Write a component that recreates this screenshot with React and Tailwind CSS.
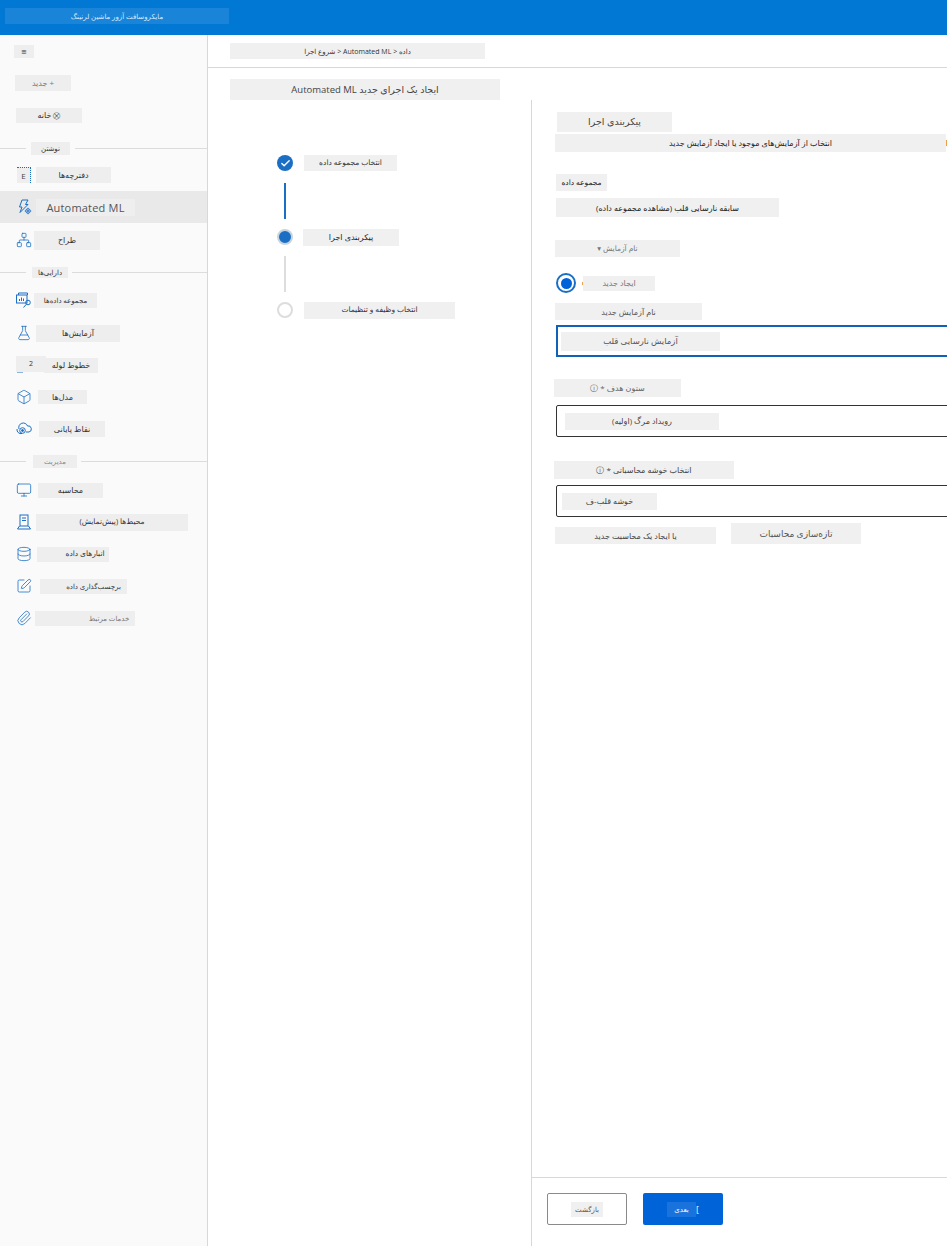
import { Box, Database, FlaskConical, Network, Paperclip, SquarePen, Monitor, Check } from "lucide-react";

const fontStack = "[font-family:'Open_Sans','DejaVu_Sans',sans-serif]";
const iconClass = "w-4 h-4 text-[#1a6fc4] shrink-0";

function Patch({ className, children }) {
	return (
		<div dir="rtl" className={"flex items-center justify-center shrink-0 whitespace-nowrap overflow-hidden leading-none " + className}>
			{children}
		</div>
	);
}

function LabIcon({ children }) {
	return (
		<svg viewBox="0 0 16 16" fill="none" stroke="currentColor" strokeWidth="1" className={iconClass}>
			{children}
		</svg>
	);
}

function NotebookIcon() {
	return (
		<div className="w-[14px] h-4 ml-[1px] shrink-0 bg-[#eeeeee] border-t border-r border-dotted border-[#1a6fc4] flex items-center justify-center text-[8px] text-[#444]">
			E
		</div>
	);
}

function AutoMlIcon() {
	return (
		<LabIcon>
			<path d="M6 1h6L9.5 5.5H12L4 13.5l2-5.5H3.5z" />
			<circle cx="12" cy="12" r="2.2" />
			<circle cx="12" cy="12" r="0.7" />
			<path d="M12 8.8v1M12 14.2v1M8.8 12h1M14.2 12h1" />
		</LabIcon>
	);
}

function DatasetIcon() {
	return (
		<LabIcon>
			<path d="M2.5 3V1h9v2" />
			<rect x="0.5" y="3" width="10.5" height="8" />
			<path d="M3.5 9V7M5.5 9V5.5M7.5 9V6.5" />
			<circle cx="12" cy="10.5" r="2.3" />
			<path d="M10.4 12.2L7.5 15.5" />
		</LabIcon>
	);
}

function EndpointIcon() {
	return (
		<LabIcon>
			<path d="M3 8A4.5 4.5 0 0 1 11.5 5a3 3 0 0 1 1.5 6h-3" />
			<path d="M1 8a4 4 0 0 0 5 4.5" />
			<circle cx="6.5" cy="9.5" r="2.8" />
			<circle cx="6.5" cy="9.5" r="1" fill="currentColor" />
		</LabIcon>
	);
}

function InstanceIcon() {
	return (
		<LabIcon>
			<rect x="4" y="1" width="8" height="11" />
			<path d="M6 4h4M6 6.5h4" />
			<path d="M3.5 12L1.5 15h13l-2-3" />
		</LabIcon>
	);
}

function PipelineIcon() {
	return (
		<LabIcon>
			<rect x="1.5" y="10" width="5" height="5" />
			<path d="M9 12.5h5" />
		</LabIcon>
	);
}

function ComputeIcon() {
	return <Monitor className={iconClass} strokeWidth={1.2} />;
}

function SectionRule({ rowClass, patchClass, label }) {
	return (
		<div className={"flex items-center " + rowClass}>
			<div className="h-px bg-[#dcdcdc] w-[26px]" />
			<Patch className={patchClass}>{label}</Patch>
			<div className="h-px bg-[#dcdcdc] flex-1" />
		</div>
	);
}

function SideRow({ icon, patchClass, label, active }) {
	return (
		<div className={"h-8 flex items-center pl-4 " + (active ? "bg-[#e9e9e9]" : "")}>
			{icon}
			<Patch className={patchClass}>{label}</Patch>
		</div>
	);
}

function Sidebar() {
	return (
		<aside className="w-[208px] shrink-0 bg-[#fafafa] border-r border-[#d8d8d8] text-[8px] text-[#333]">
			<div className="h-8 flex items-center pl-[14px]">
				<Patch className="w-5 h-[13px] bg-[#eeeeee] text-[7px]">≡</Patch>
			</div>
			<div className="h-8 flex items-center pl-[15px]">
				<Patch className="w-14 h-4 bg-[#eeeeee] text-[#777]">+ جدید</Patch>
			</div>
			<div className="h-8 flex items-center pl-4">
				<Patch className="w-[66px] h-[15px] bg-[#eeeeee] gap-[2px]">
					<span className="text-[7px]">⛒</span>
					<span>خانه</span>
				</Patch>
			</div>
			<SectionRule rowClass="h-7 pt-[6px]" patchClass="w-[39px] h-[13px] bg-[#eeeeee] ml-[5px] mr-[5px] text-[7px]" label="نوشتن" />
			<SideRow icon={<NotebookIcon />} patchClass="ml-[5px] w-[75px] h-4 bg-[#eeeeee]" label="دفترچه‌ها" />
			<SideRow active icon={<AutoMlIcon />} patchClass="ml-[4px] w-[99px] h-[17px] bg-[#eeeeee] text-[11px] tracking-[0.2px] text-[#555]" label="Automated ML" />
			<div className="h-px" />
			<SideRow icon={<Network className={iconClass} strokeWidth={1.2} />} patchClass="ml-[2px] w-[66px] h-[19px] bg-[#eeeeee]" label="طراح" />
			<SectionRule rowClass="h-7 pt-1" patchClass="w-9 h-[11px] bg-[#eeeeee] ml-[6px] mr-1 text-[7px]" label="دارایی‌ها" />
			<SideRow icon={<DatasetIcon />} patchClass="ml-[2px] w-[63px] h-[15px] bg-[#eeeeee] text-[7px]" label="مجموعه داده‌ها" />
			<div className="h-px" />
			<SideRow icon={<FlaskConical className={iconClass} strokeWidth={1.2} />} patchClass="ml-1 w-[84px] h-[17px] bg-[#eeeeee]" label="آزمایش‌ها" />
			<div className="h-8 flex items-center pl-4">
				<PipelineIcon />
				<Patch className="-ml-4 w-[30px] h-4 -mt-[3px] bg-[#eeeeee] text-[7px]">2</Patch>
				<Patch className="-ml-[2px] w-[54px] h-[15px] bg-[#eeeeee]">خطوط لوله</Patch>
			</div>
			<SideRow icon={<Box className={iconClass} strokeWidth={1.2} />} patchClass="ml-[6px] w-[49px] h-[14px] bg-[#eeeeee]" label="مدل‌ها" />
			<SideRow icon={<EndpointIcon />} patchClass="ml-[7px] w-[66px] h-4 bg-[#eeeeee]" label="نقاط پایانی" />
			<SectionRule rowClass="h-[29px] pt-[3px]" patchClass="w-11 h-[13px] bg-[#eeeeee] ml-[7px] mr-1 text-[7px] text-[#888]" label="مدیریت" />
			<SideRow icon={<ComputeIcon />} patchClass="ml-[6px] w-[65px] h-[15px] bg-[#eeeeee]" label="محاسبه" />
			<SideRow icon={<InstanceIcon />} patchClass="ml-1 w-[152px] h-[17px] bg-[#eeeeee] text-[7.5px]" label="محیط‌ها (پیش‌نمایش)" />
			<SideRow icon={<Database className={iconClass} strokeWidth={1.2} />} patchClass="ml-[5px] w-[72px] h-[15px] bg-[#eeeeee] pl-6 text-[7.5px]" label="انبارهای داده" />
			<SideRow icon={<SquarePen className={iconClass} strokeWidth={1.2} />} patchClass="ml-2 w-[87px] h-[15px] bg-[#eeeeee] pl-5 text-[7px]" label="برچسب‌گذاری داده" />
			<SideRow icon={<Paperclip className={iconClass} strokeWidth={1.2} />} patchClass="ml-[3px] w-[100px] h-[15px] bg-[#eeeeee] pl-[48px] text-[7px] text-[#777]" label="خدمات مرتبط" />
		</aside>
	);
}

function Stepper() {
	return (
		<div className="w-[323px] shrink-0 pl-[69px] pt-[55px] text-[#333]">
			<div className="flex items-center h-4">
				<div className="w-4 h-4 rounded-full bg-[#1a6fc4] flex items-center justify-center">
					<Check className="w-[11px] h-[11px] text-white" strokeWidth={3} />
				</div>
				<Patch className="ml-[11px] w-[93px] h-4 bg-[#f0f0f0] text-[7.5px]">انتخاب مجموعه داده</Patch>
			</div>
			<div className="w-[2px] h-9 bg-[#1a6fc4] ml-[7px] mt-[12px]" />
			<div className="flex items-center h-4 mt-[10px]">
				<div className="w-4 h-4 rounded-full bg-[#1a6fc4] border-2 border-[#c9d3de]" />
				<Patch className="ml-[10px] w-24 h-[17px] bg-[#f0f0f0] text-[8px] text-[#222]">پیکربندی اجرا</Patch>
			</div>
			<div className="w-[2px] h-9 bg-[#dddddd] ml-[7px] mt-[11px]" />
			<div className="flex items-center h-4 mt-[10px]">
				<div className="w-4 h-4 rounded-full bg-white border-2 border-[#dddddd]" />
				<Patch className="ml-[11px] w-[151px] h-[17px] bg-[#f0f0f0] text-[7.5px]">انتخاب وظیفه و تنظیمات</Patch>
			</div>
		</div>
	);
}

function ConfigPanel() {
	return (
		<section className="flex-1 min-w-0 border-l border-[#d8d8d8] flex flex-col overflow-hidden text-[#333]">
			<div className="flex-1 pl-[23px] pt-3">
				<Patch className="ml-[2px] w-[115px] h-5 bg-[#f0f0f0] text-[9.5px] text-[#444]">پیکربندی اجرا</Patch>
				<div className="flex items-center mt-[2px]">
					<Patch className="w-[391px] h-[18px] bg-[#f0f0f0] text-[8px] text-[#222]">انتخاب از آزمایش‌های موجود یا ایجاد آزمایش جدید</Patch>
					<div className="w-px h-[6px] bg-[#e8a04c]" />
				</div>
				<Patch className="ml-[1px] mt-[22px] w-[51px] h-[17px] bg-[#f0f0f0] text-[7.5px] text-[#222]">مجموعه داده</Patch>
				<Patch className="ml-[1px] mt-[7px] w-[223px] h-[19px] bg-[#f0f0f0] text-[8px] text-[#222]">سابقه نارسایی قلب (مشاهده مجموعه داده)</Patch>
				<Patch className="mt-[23px] w-[125px] h-[17px] bg-[#f0f0f0] text-[7.5px] text-[#777]">نام آزمایش ▾</Patch>
				<div className="flex items-center mt-[16px] ml-[1px] h-5">
					<div className="w-5 h-5 rounded-full bg-white border-2 border-[#1a6fc4] flex items-center justify-center">
						<div className="w-[11px] h-[11px] rounded-full bg-[#0063d8]" />
					</div>
					<div className="ml-[6px] w-px h-[3px] bg-[#e8a04c]" />
					<Patch className="w-[72px] h-[15px] bg-[#f0f0f0] text-[8px] text-[#777]">ایجاد جدید</Patch>
				</div>
				<Patch className="mt-[10px] w-[147px] h-[17px] bg-[#f0f0f0] text-[8px] text-[#555]">نام آزمایش جدید</Patch>
				<div className="ml-[1px] mt-[5px] w-[420px] h-8 border-2 border-[#0f62b8] flex items-center pl-[3px]">
					<Patch className="w-[159px] h-[19px] bg-[#f0f0f0] text-[8.5px] text-[#555]">آزمایش نارسایی قلب</Patch>
				</div>
				<Patch className="-ml-[1px] mt-[22px] w-[127px] h-[18px] bg-[#f0f0f0] text-[8px] text-[#666]">ستون هدف * ⓘ</Patch>
				<div className="ml-[1px] mt-2 w-[420px] h-8 rounded-[2px] border border-[#333] flex items-center pl-2">
					<Patch className="w-[154px] h-[17px] bg-[#f0f0f0] text-[8px] text-[#444]">رویداد مرگ (اولیه)</Patch>
				</div>
				<Patch className="-ml-[1px] mt-6 w-[180px] h-[18px] bg-[#f0f0f0] text-[8px] text-[#444]">انتخاب خوشه محاسباتی * ⓘ</Patch>
				<div className="ml-[1px] mt-[6px] w-[420px] h-8 rounded-[2px] border border-[#333] flex items-center pl-[5px]">
					<Patch className="w-[95px] h-[17px] bg-[#f0f0f0] text-[8px] text-[#444]">خوشه قلب-ف</Patch>
				</div>
				<div className="flex items-end mt-[6px] h-[21px]">
					<Patch className="w-[161px] h-[17px] bg-[#f0f0f0] text-[8px] text-[#444]">یا ایجاد یک محاسبت جدید</Patch>
					<Patch className="ml-[15px] w-[130px] h-[21px] bg-[#f0f0f0] text-[9px] text-[#555]">تازه‌سازی محاسبات</Patch>
				</div>
			</div>
			<footer className="h-[69px] shrink-0 border-t border-[#d8d8d8] flex items-start pt-[15px] pl-[15px] gap-4">
				<div className="w-20 h-8 rounded-[2px] border border-[#8a8a8a] bg-white flex items-center justify-center">
					<Patch className="w-8 h-[15px] bg-[#f0f0f0] text-[7px] text-[#555]">بازگشت</Patch>
				</div>
				<div className="w-20 h-8 rounded-[2px] bg-[#0063d8] flex items-center justify-center">
					<Patch className="w-[29px] h-[15px] bg-[#1a72dc] text-[7px] text-white">بعدی</Patch>
					<span className="text-white text-[9px] leading-none">[</span>
				</div>
			</footer>
		</section>
	);
}

export default function App() {
	return (
		<div className={"w-[947px] h-[1246px] overflow-hidden flex flex-col bg-white " + fontStack}>
			<header className="h-[35px] shrink-0 bg-[#0078d4] flex items-center pl-[5px] pb-[3px]">
				<Patch className="w-[224px] h-4 bg-[#1a84d8] text-[7px] text-[#d8ecfb]">مایکروسافت آزور ماشین لرنینگ</Patch>
			</header>
			<div className="flex-1 min-h-0 flex">
				<Sidebar />
				<main className="flex-1 min-w-0 flex flex-col">
					<div className="h-[33px] shrink-0 border-b border-[#d8d8d8] flex items-center pl-[22px]">
						<Patch className="w-[255px] h-4 bg-[#f0f0f0] text-[7px] text-[#333]">داده &lt; Automated ML &lt; شروع اجرا</Patch>
					</div>
					<div className="pl-[22px] pt-[11px] shrink-0">
						<Patch className="w-[270px] h-[21px] bg-[#f0f0f0] text-[9.5px] text-[#444]">ایجاد یک اجرای جدید Automated ML</Patch>
					</div>
					<div className="flex-1 min-h-0 flex">
						<Stepper />
						<ConfigPanel />
					</div>
				</main>
			</div>
		</div>
	);
}
